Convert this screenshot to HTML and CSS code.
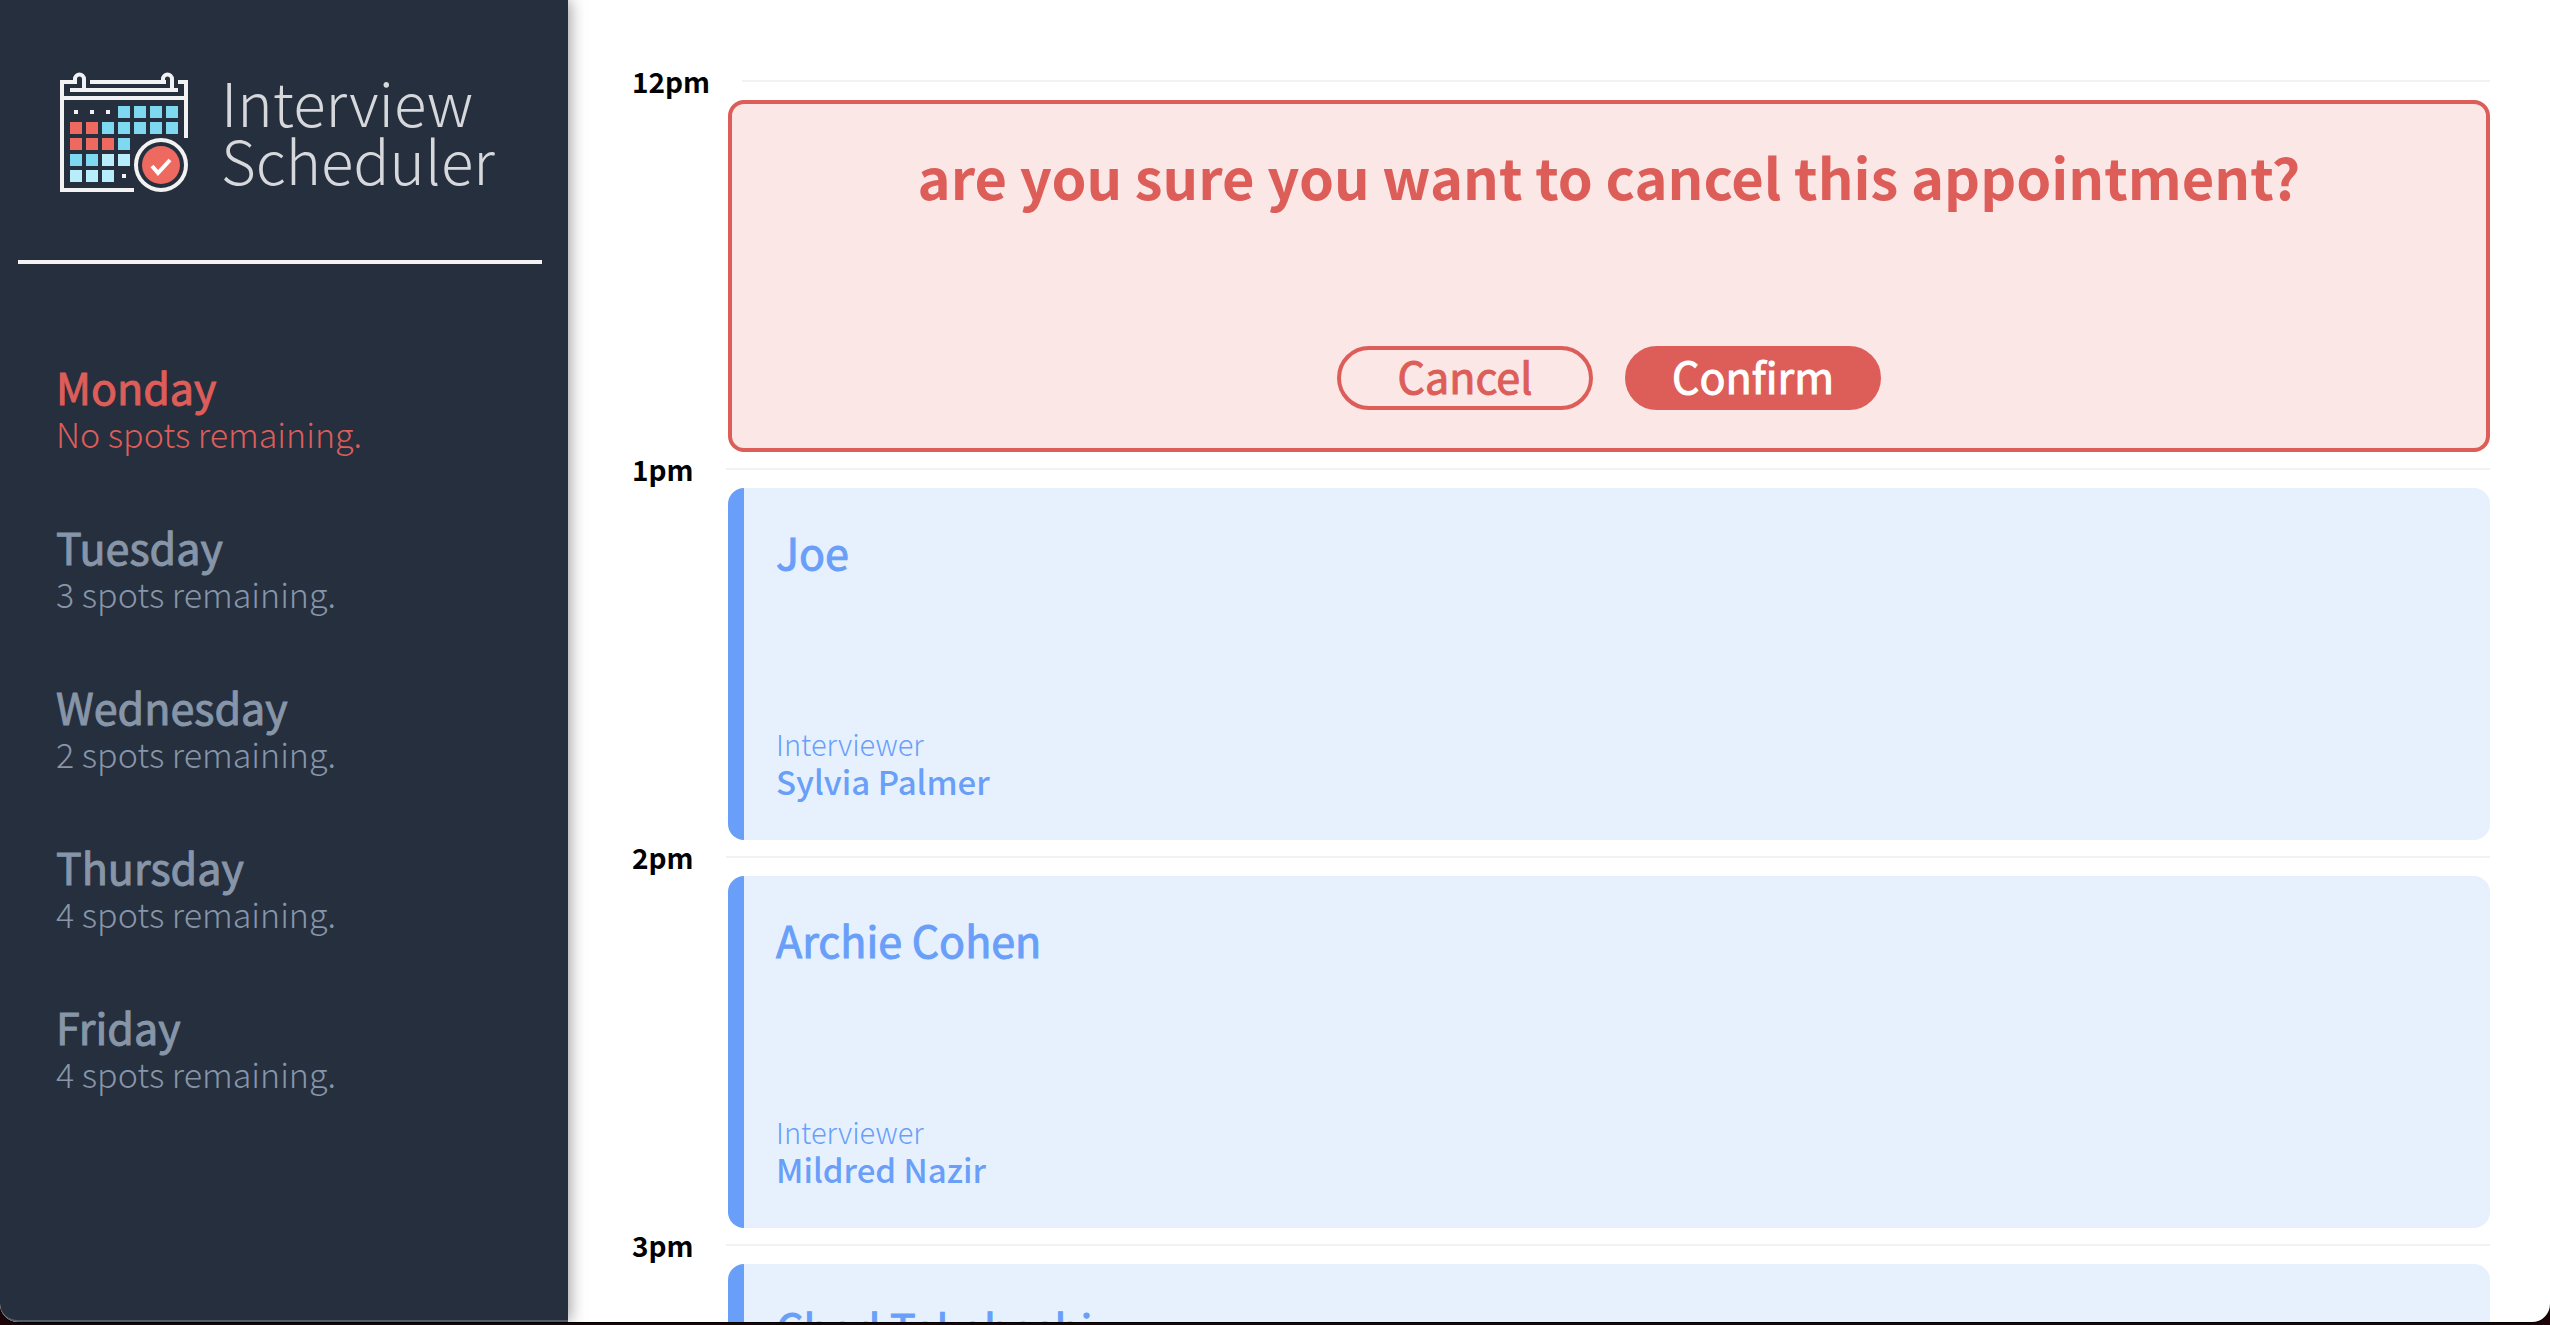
FILE: index.html
```html
<!DOCTYPE html>
<html lang="en">
<head>
<meta charset="utf-8">
<title>Interview Scheduler</title>
<link rel="stylesheet" href="styles.css">
</head>
<body>
<div class="window">
  <aside class="sidebar">
    <div class="logo">
      <svg class="logo-icon" viewBox="0 0 128 122" aria-hidden="true">
        <g fill="none" stroke="#f2f2f2" stroke-width="4">
          <path d="M24 16V7a4.500 4.500 0 0 0-9 0v3H2v108h72M30 10h76M10 18h108M2 26h124M118 10h8v56M112 18V7a4.500 4.500 0 0 0-9 0v3"/>
          <circle cx="101" cy="93" r="25"/>
        </g>
        <circle cx="101" cy="93" r="19" fill="#ee6a61"/>
        <path d="M92 94l6 7 12-13" fill="none" stroke="#fff" stroke-width="4"/>
        <path fill="#f2f2f2" d="M14 38h4v4h-4zM30 38h4v4h-4zM46 38h4v4h-4zM62 102h4v4h-4z"/>
        <path fill="#7dd8f0" d="M58 34h12v12H58zM74 34h12v12H74zM90 34h12v12H90zM106 34h12v12h-12zM42 50h12v12H42zM58 50h12v12H58zM74 50h12v12H74zM90 50h12v12H90zM106 50h12v12h-12zM58 66h12v12H58zM10 82h12v12H10zM26 82h12v12H26z"/>
        <path fill="#ee6a61" d="M10 50h12v12H10zM26 50h12v12H26zM10 66h12v12H10zM26 66h12v12H26zM42 66h12v12H42z"/>
        <path fill="#b8eefb" d="M42 82h12v12H42zM58 82h12v12H58zM10 98h12v12H10zM26 98h12v12H26zM42 98h12v12H42z"/>
      </svg>
      <span class="logo-name">Interview<br>Scheduler</span>
    </div>
    <hr class="divider">
    <nav class="days">
      <a class="day day-selected" href="#monday"><span class="day-name">Monday</span><span class="day-spots">No spots remaining.</span></a>
      <a class="day" href="#tuesday"><span class="day-name">Tuesday</span><span class="day-spots">3 spots remaining.</span></a>
      <a class="day" href="#wednesday"><span class="day-name">Wednesday</span><span class="day-spots">2 spots remaining.</span></a>
      <a class="day" href="#thursday"><span class="day-name">Thursday</span><span class="day-spots">4 spots remaining.</span></a>
      <a class="day" href="#friday"><span class="day-name">Friday</span><span class="day-spots">4 spots remaining.</span></a>
    </nav>
  </aside>
  <main class="schedule">
    <article class="appointment">
      <header class="time"><h4 class="time-label">12pm</h4><hr class="time-line"></header>
      <section class="card card-confirm">
        <h1 class="confirm-message">are you sure you want to cancel this appointment?</h1>
        <div class="actions">
          <button class="button" type="button">Cancel</button>
          <button class="button button-solid" type="button">Confirm</button>
        </div>
      </section>
    </article>
    <article class="appointment">
      <header class="time"><h4 class="time-label">1pm</h4><hr class="time-line"></header>
      <section class="card card-show">
        <h2 class="student">Joe</h2>
        <div><h4 class="role">Interviewer</h4><h3 class="interviewer">Sylvia Palmer</h3></div>
      </section>
    </article>
    <article class="appointment">
      <header class="time"><h4 class="time-label">2pm</h4><hr class="time-line"></header>
      <section class="card card-show">
        <h2 class="student">Archie Cohen</h2>
        <div><h4 class="role">Interviewer</h4><h3 class="interviewer">Mildred Nazir</h3></div>
      </section>
    </article>
    <article class="appointment">
      <header class="time"><h4 class="time-label">3pm</h4><hr class="time-line"></header>
      <section class="card card-show">
        <h2 class="student">Chad Takahashi</h2>
      </section>
    </article>
  </main>
</div>
</body>
</html>
```
FILE: styles.css
```css
* { box-sizing: border-box; }

body {
  margin: 0;
  height: 100vh;
  padding-bottom: 3px;
  overflow: hidden;
  background: #1c0408;
  font-family: "Noto Sans CJK SC", "Noto Sans", sans-serif;
}

h1, h2, h3, h4 { margin: 0; }

.window {
  display: flex;
  height: 100%;
  overflow: hidden;
  background: #fff;
  border-radius: 0 0 18px 18px;
  box-shadow: 0 1px 0 #000;
}

.sidebar {
  flex: 0 0 568px;
  padding: 72px 26px 0 18px;
  border-bottom: 2px solid #525b68;
  border-bottom-left-radius: 18px;
  background: #252f3e;
  box-shadow: 2px 0 16px rgba(0, 0, 0, 0.4);
}

.logo {
  display: flex;
  gap: 33px;
  height: 188px;
  padding-left: 42px;
}

.logo-icon { width: 128px; height: 122px; }

.logo-name {
  color: #d6d8dc;
  font-size: 60px;
  font-weight: 300;
  line-height: 58px;
}

.divider {
  height: 4px;
  margin: 0;
  border: 0;
  background: #f4f2f3;
}

.days {
  display: grid;
  gap: 64px;
  padding: 98px 0 0 38px;
}

.day {
  display: block;
  color: #8795a8;
  text-decoration: none;
}

.day-selected { color: #dd5d59; }

.day-name, .day-spots { display: block; line-height: 48px; }
.day-name { font-size: 43px; }
.day-spots { font-size: 34px; font-weight: 300; }

.day-name, .button, .student { -webkit-text-stroke: 1px currentColor; }

.schedule {
  flex: 1;
  min-width: 0;
  padding: 62px 60px 0 64px;
}

.appointment { height: 388px; }

.time {
  display: flex;
  align-items: center;
  gap: 32px;
  height: 38px;
}

.time-label {
  font-size: 28px;
  font-weight: 700;
  line-height: 38px;
}

.time-line {
  flex: 1;
  height: 2px;
  margin: 0;
  border: 0;
  background: #f2f2f2;
}

.card {
  display: flex;
  flex-direction: column;
  justify-content: space-between;
  height: 352px;
  margin-left: 96px;
  border-radius: 16px;
}

.card-confirm {
  align-items: center;
  padding: 38px;
  border: 4px solid #dd5d59;
  background: #fae7e6;
  color: #dd5d59;
}

.confirm-message {
  font-size: 56px;
  font-weight: 700;
  line-height: 68px;
}

.actions { display: flex; gap: 32px; }

.button {
  width: 256px;
  height: 64px;
  padding: 0 0 6px;
  border: 4px solid #dd5d59;
  border-radius: 32px;
  background: transparent;
  color: #dd5d59;
  font-family: inherit;
  font-size: 43px;
  line-height: 50px;
}

.button-solid { background: #dd5d59; color: #fff; }

.card-show {
  padding: 32px 32px 40px;
  border-left: 16px solid #699ff9;
  background: #e7f1fe;
  color: #699ff9;
}

.student { font-size: 43px; font-weight: 400; line-height: 62px; }
.role { font-size: 29px; font-weight: 300; line-height: 38px; }
.interviewer { font-size: 33px; font-weight: 500; line-height: 38px; }
```
